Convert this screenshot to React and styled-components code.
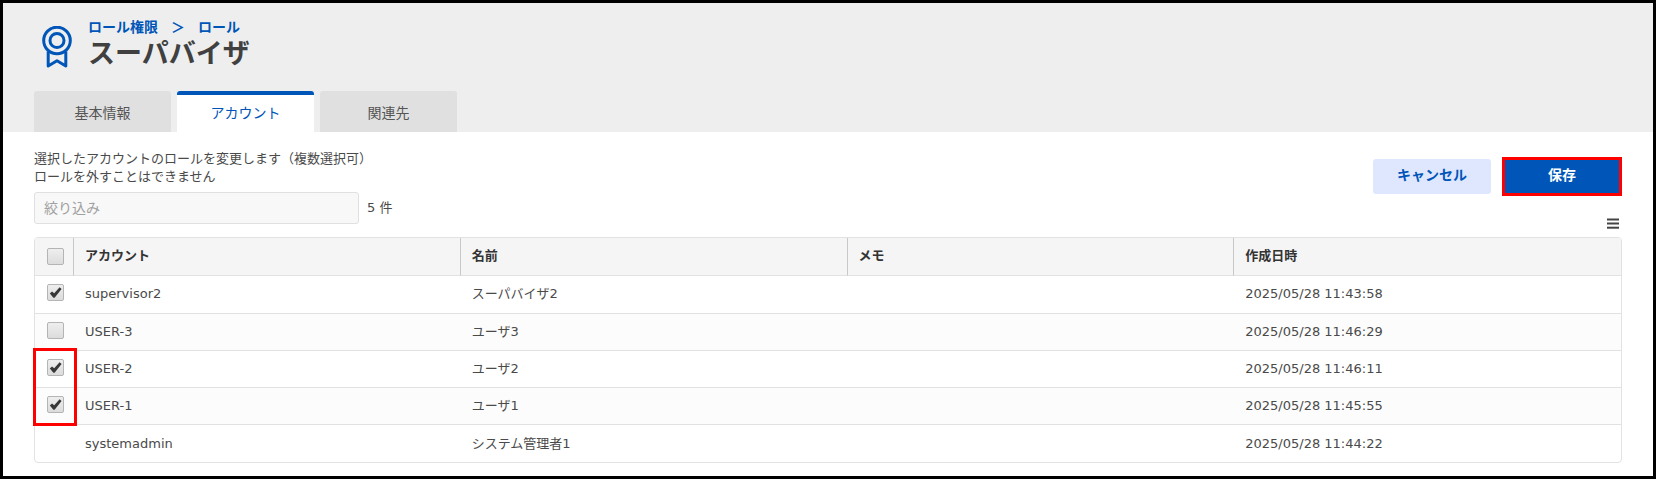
import styled, { createGlobalStyle } from "styled-components";
import { useState } from "react";

const GlobalStyle = createGlobalStyle`
    * {
        box-sizing : border-box;
    }

    body {
        margin : 0;
        background-color : white;
        color : #4a4a4a;
        font-family : "DejaVu Sans", "Noto Sans CJK JP", sans-serif;
        font-size : 13px;
        line-height : 18px;
    }

    button, input {
        font-family : inherit;
    }
`

const Page = styled.div`
    min-height : 100vh;
    border : 3px solid black;
`

const Header = styled.header`
    padding : 13px 31px 0;
    background-color : #eeeeee;
`

const TitleArea = styled.div`
    display : flex;
    gap : 16px;
    padding-left : 8px;

    > svg {
        margin-top : 10px;
    }
`

const Breadcrumb = styled.nav`
    display : flex;
    gap : 13px;
    padding-top : 2px;
    font-size : 14px;
    font-weight : 700;
    color : #0056b8;

    a {
        color : inherit;
        text-decoration : none;
    }
`

const Title = styled.h1`
    margin : 0;
    font-size : 27px;
    line-height : 36px;
    color : #404040;
`

const Tabs = styled.div`
    display : flex;
    gap : 6px;
    margin-top : 19px;
`

const Tab = styled.button`
    width : 137px;
    height : 41px;
    padding : 0 0 4px;
    border : none;
    border-top : 4px solid ${({ $active }) => ($active ? "#0056b8" : "#e0e0e0")};
    border-radius : 3px 3px 0 0;
    background-color : ${({ $active }) => ($active ? "white" : "#e0e0e0")};
    color : ${({ $active }) => ($active ? "#0056b8" : "#555555")};
    font-size : 14px;
    cursor : pointer;
`

const Main = styled.main`
    padding : 18px 31px 13px;
`

const Toolbar = styled.div`
    display : flex;
    justify-content : space-between;
    margin-bottom : 8px;

    p {
        margin : 0;
    }
`

const Filter = styled.div`
    display : flex;
    align-items : center;
    gap : 8px;
    margin : 6px 0 5px;

    input {
        width : 325px;
        height : 32px;
        padding : 0 9px;
        border : 1px solid #e0e0e0;
        border-radius : 3px;
        background-color : #f8f8f8;
        font-size : 14px;
    }

    input::placeholder {
        color : #a0a0a0;
    }
`

const Actions = styled.div`
    display : flex;
    flex-direction : column;
    justify-content : space-between;
    align-items : flex-end;
    padding-top : 7px;
`

const Buttons = styled.div`
    display : flex;
    align-items : center;
    gap : 11px;
`

const CancelButton = styled.button`
    width : 118px;
    height : 35px;
    padding : 0 0 5px;
    border : none;
    border-radius : 3px;
    background-color : #dfe7ff;
    color : #0056b8;
    font-size : 14px;
    font-weight : 700;
    cursor : pointer;
`

const SaveButton = styled(CancelButton)`
    width : 120px;
    height : 39px;
    border : 3px solid #ff0000;
    border-radius : 0;
    background-color : #0056b8;
    color : white;
`

const MenuButton = styled.button`
    display : flex;
    margin-right : 3px;
    padding : 0;
    border : none;
    background : none;
    cursor : pointer;
`

const TableFrame = styled.div`
    border : 1px solid #e2e2e2;
    border-radius : 4px;
`

const Table = styled.table`
    width : 100%;
    table-layout : fixed;
    border-collapse : separate;
    border-spacing : 0;

    th, td {
        height : 37px;
        padding : 0 11px;
        border-bottom : 1px solid #e2e2e2;
        text-align : left;
    }

    th {
        height : 38px;
        padding-bottom : 2px;
        border-right : 1px solid #c8c8c8;
        background-color : #f5f5f5;
        color : #333333;
    }

    th:first-child {
        width : 39px;
        border-top-left-radius : 3px;
    }

    th:last-child {
        border-right : none;
        border-top-right-radius : 3px;
    }

    th:first-child, td:first-child {
        padding : 0 0 0 12px;
    }

    tbody tr:first-child td {
        height : 38px;
        padding-bottom : 2px;
    }

    tbody tr:nth-child(even) {
        background-color : #fcfcfc;
    }

    tbody tr:last-child td {
        border-bottom : none;
    }
`

const SelectCell = styled.td`
    position : relative;
`

const CheckBox = styled.span`
    display : grid;
    width : 17px;
    height : 17px;
    /* body rows sit a little above the centre line */
    margin-bottom : ${({ $raised }) => ($raised ? "3px" : "0")};

    input, svg {
        grid-area : 1 / 1;
    }

    input {
        appearance : none;
        width : 17px;
        height : 17px;
        margin : 0;
        border : 1px solid #b4b4b4;
        border-radius : 2px;
        background : linear-gradient(#eeeeee, #dcdcdc);
        cursor : pointer;
    }

    svg {
        pointer-events : none;
    }
`

// red frame over the checkboxes of two rows
const Highlight = styled.span`
    position : absolute;
    top : -3px;
    left : -2px;
    z-index : 1;
    width : 44px;
    height : 78px;
    border : 3px solid #ff0000;
    pointer-events : none;
`

const accounts = [
    { account: "supervisor2", name: "スーパバイザ2", created: "2025/05/28 11:43:58" },
    { account: "USER-3", name: "ユーザ3", created: "2025/05/28 11:46:29" },
    { account: "USER-2", name: "ユーザ2", created: "2025/05/28 11:46:11", highlight: true },
    { account: "USER-1", name: "ユーザ1", created: "2025/05/28 11:45:55" },
    { account: "systemadmin", name: "システム管理者1", created: "2025/05/28 11:44:22", locked: true },
];

const tabs = ["基本情報", "アカウント", "関連先"];

const RibbonIcon = () => (
    <svg width="30" height="43" viewBox="0 0 30 43" fill="none" stroke="#0056b8" strokeWidth="3" strokeLinejoin="round" aria-hidden="true">
        <circle cx="15" cy="14.5" r="13.3" />
        <circle cx="15" cy="14.5" r="7" />
        <path d="M6.2 25.5v14.5l8.8-5.2 8.8 5.2V25.5" />
    </svg>
)

const Check = ({ label, checked, onChange, raised }) => (
    <CheckBox $raised={raised}>
        <input type="checkbox" aria-label={label} checked={checked} onChange={onChange} />
        {checked && (
            <svg width="17" height="17" viewBox="0 0 17 17" aria-hidden="true">
                <path d="M2.8 9.4L5 7.4L7.2 9.3L12.6 3.2L14.6 5L7.6 13.8H6.4Z" fill="#383838" />
            </svg>
        )}
    </CheckBox>
)

const App = () => {

    const [tab, setTab] = useState("アカウント");
    const [filter, setFilter] = useState("");
    const [selected, setSelected] = useState(["supervisor2", "USER-2", "USER-1"]);

    const list = accounts.filter(el => el.account.includes(filter) || el.name.includes(filter));
    const selectable = accounts.filter(el => !el.locked).map(el => el.account);
    const allSelected = selected.length === selectable.length;

    const handleSelect = (account) => {
        if (selected.includes(account)) {
            setSelected(selected.filter(el => el !== account));
        } else {
            setSelected([...selected, account]);
        }
    }

    return (
        <>
        <GlobalStyle />
        <Page>
            <Header>
                <TitleArea>
                    <RibbonIcon />
                    <div>
                        <Breadcrumb>
                            <a href="#permissions">ロール権限</a>
                            <span>＞</span>
                            <a href="#roles">ロール</a>
                        </Breadcrumb>
                        <Title>スーパバイザ</Title>
                    </div>
                </TitleArea>
                <Tabs role="tablist">
                    {tabs.map(el => (
                        <Tab key={el} role="tab" aria-selected={tab === el} $active={tab === el} onClick={() => setTab(el)}>{el}</Tab>
                    ))}
                </Tabs>
            </Header>
            <Main>
                <Toolbar>
                    <div>
                        <p>選択したアカウントのロールを変更します（複数選択可）</p>
                        <p>ロールを外すことはできません</p>
                        <Filter>
                            <input type="text" aria-label="絞り込み" placeholder="絞り込み" value={filter} onChange={(e) => setFilter(e.target.value)} />
                            <span>{list.length} 件</span>
                        </Filter>
                    </div>
                    <Actions>
                        <Buttons>
                            <CancelButton onClick={() => setSelected([])}>キャンセル</CancelButton>
                            <SaveButton>保存</SaveButton>
                        </Buttons>
                        <MenuButton aria-label="メニュー">
                            <svg width="12" height="11" viewBox="0 0 12 11" fill="#444444" aria-hidden="true">
                                <rect width="12" height="2" y="0.5" />
                                <rect width="12" height="2" y="4.5" />
                                <rect width="12" height="2" y="8.7" />
                            </svg>
                        </MenuButton>
                    </Actions>
                </Toolbar>
                <TableFrame>
                    <Table>
                        <thead>
                            <tr>
                                <th>
                                    <Check label="すべて選択" checked={allSelected} onChange={() => setSelected(allSelected ? [] : selectable)} />
                                </th>
                                <th>アカウント</th>
                                <th>名前</th>
                                <th>メモ</th>
                                <th>作成日時</th>
                            </tr>
                        </thead>
                        <tbody>
                            {list.map(el => (
                                <tr key={el.account}>
                                    <SelectCell>
                                        {!el.locked && (
                                            <Check raised label={el.account} checked={selected.includes(el.account)} onChange={() => handleSelect(el.account)} />
                                        )}
                                        {el.highlight && <Highlight />}
                                    </SelectCell>
                                    <td>{el.account}</td>
                                    <td>{el.name}</td>
                                    <td></td>
                                    <td>{el.created}</td>
                                </tr>
                            ))}
                        </tbody>
                    </Table>
                </TableFrame>
            </Main>
        </Page>
        </>
    )
}

export default App;
